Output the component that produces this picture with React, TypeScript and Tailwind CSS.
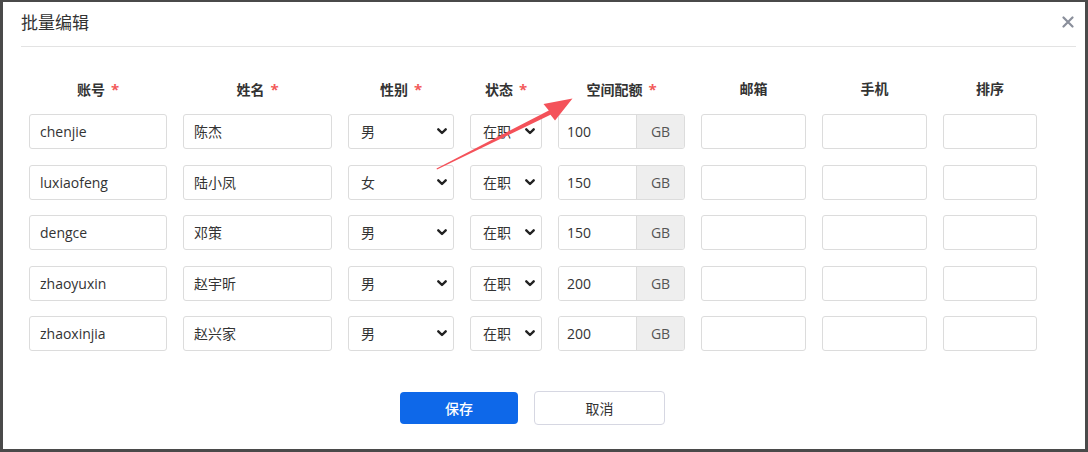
import React from 'react';

type Row = { account: string; name: string; gender: string; quota: string };

const rows: Row[] = [
  { account: 'chenjie', name: '陈杰', gender: '男', quota: '100' },
  { account: 'luxiaofeng', name: '陆小凤', gender: '女', quota: '150' },
  { account: 'dengce', name: '邓策', gender: '男', quota: '150' },
  { account: 'zhaoyuxin', name: '赵宇昕', gender: '男', quota: '200' },
  { account: 'zhaoxinjia', name: '赵兴家', gender: '男', quota: '200' },
];

// column widths in px, gaps are 16px
const columns = [
  { label: '账号', required: true, w: 'w-[138px]' },
  { label: '姓名', required: true, w: 'w-[149px]' },
  { label: '性别', required: true, w: 'w-[106px]' },
  { label: '状态', required: true, w: 'w-[72px]' },
  { label: '空间配额', required: true, w: 'w-[127px]' },
  { label: '邮箱', required: false, w: 'w-[105px]' },
  { label: '手机', required: false, w: 'w-[105px]' },
  { label: '排序', required: false, w: 'w-[94px]' },
];

const Chevron = () => (
  <svg width="10" height="7" viewBox="0 0 10 7" className="shrink-0">
    <polyline points="1.3,1.3 5,5 8.7,1.3" fill="none" stroke="#222" strokeWidth="2.4" strokeLinecap="round" strokeLinejoin="round" />
  </svg>
);

function TextBox({ value, w }: { value?: string; w: string }) {
  return (
    <div className={`${w} h-[35px] border border-[#dcdcdc] rounded-[3px] bg-white flex items-center pl-[10px] text-[14px] text-[#333]`}>
      {value}
    </div>
  );
}

function SelectBox({ value, w, pl }: { value: string; w: string; pl: string }) {
  return (
    <div className={`${w} h-[35px] border border-[#dcdcdc] rounded-[3px] bg-white flex items-center justify-between ${pl} pr-[6px] text-[14px] text-[#333]`}>
      <span>{value}</span>
      <Chevron />
    </div>
  );
}

export default function App() {
  return (
    <div
      className="relative w-[1088px] h-[452px] bg-white border-[#4a4a4a] border-l-[3px] border-t-[2px] border-r-[3px] border-b-[3px] overflow-hidden"
      style={{ fontFamily: '"Open Sans", "Noto Sans CJK SC", sans-serif' }}
    >
      {/* header */}
      <div className="ml-[18px] mr-[9px] h-[45px] pb-[3px] flex items-center justify-between border-b border-[#e3e3e3]">
        <span className="text-[17px] text-[#333]">批量编辑</span>
        <svg width="12" height="12" viewBox="0 0 12 12" className="mr-[2px] mb-[1px]">
          <path d="M1.5 1.5 L10.5 10.5 M10.5 1.5 L1.5 10.5" stroke="#8a8f9b" strokeWidth="2.2" strokeLinecap="round" />
        </svg>
      </div>

      {/* table */}
      <div className="pl-[26px] pt-[32px]">
        <div className="flex gap-4 h-[20px] items-center">
          {columns.map((c) => (
            <div key={c.label} className={`${c.w} text-center text-[14px] font-bold text-[#333] leading-[20px]`}>
              {c.label}
              {c.required && <span className="text-[#f25a5a] text-[15px] ml-[6px]">*</span>}
            </div>
          ))}
        </div>

        <div className="flex flex-col gap-[15.5px] mt-[15px]">
          {rows.map((r) => (
            <div key={r.account} className="flex gap-4">
              <TextBox value={r.account} w="w-[138px]" />
              <TextBox value={r.name} w="w-[149px]" />
              <SelectBox value={r.gender} w="w-[106px]" pl="pl-[12px]" />
              <SelectBox value="在职" w="w-[72px]" pl="pl-[12px]" />
              <div className="w-[127px] h-[35px] flex border border-[#dcdcdc] rounded-[3px] overflow-hidden">
                <div className="flex-1 bg-white flex items-center pl-[8px] text-[14px] text-[#333]">{r.quota}</div>
                <div className="w-[48px] bg-[#eeeeee] border-l border-[#dcdcdc] flex items-center justify-center text-[14px] text-[#555]">GB</div>
              </div>
              <TextBox w="w-[105px]" />
              <TextBox w="w-[105px]" />
              <TextBox w="w-[94px]" />
            </div>
          ))}
        </div>
      </div>

      {/* footer buttons */}
      <div className="flex justify-center gap-4 mt-[40px] pr-[23px]">
        <button className="w-[118px] h-[32px] mt-[1px] rounded-[4px] bg-[#0e68e9] text-white text-[14px] font-medium">保存</button>
        <button className="w-[131px] h-[34px] rounded-[4px] bg-white border border-[#d6d7e2] text-[#333] text-[14px]">取消</button>
      </div>

      {/* annotation arrow */}
      <svg className="absolute -left-[3px] -top-[2px] pointer-events-none" width="1088" height="452" viewBox="0 0 1088 452">
        <polygon points="437,169.6 550.5,114.8 555,120.5 572.5,98.5 543.5,104 548.8,110.6 436.5,168.4" fill="#f4525a" />
      </svg>
    </div>
  );
}
